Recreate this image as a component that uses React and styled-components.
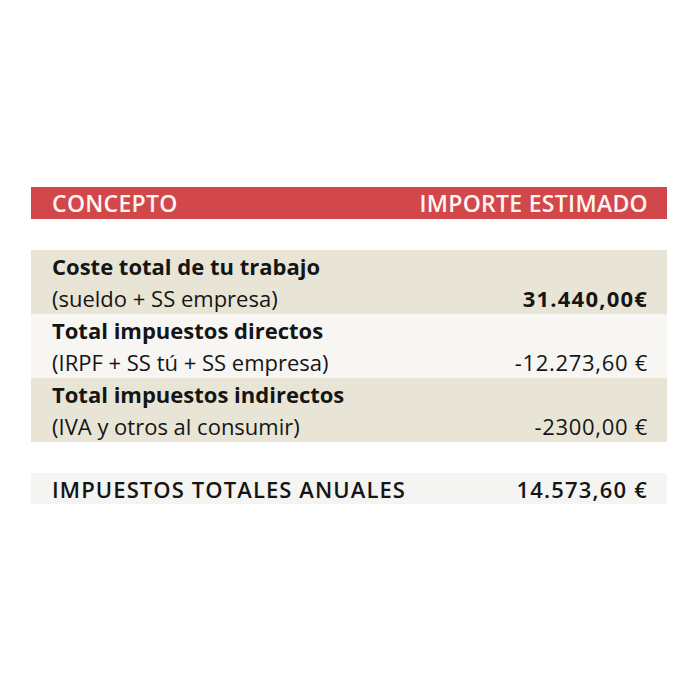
import React from "react";
import styled, { createGlobalStyle } from "styled-components";

const GlobalStyle = createGlobalStyle`
  html, body {
    margin: 0;
    padding: 0;
    background: #ffffff;
  }
  body {
    font-family: "Open Sans", "DejaVu Sans", sans-serif;
    color: #151515;
  }
`;

const rows = [
  {
    title: "Coste total de tu trabajo",
    detail: "(sueldo + SS empresa)",
    amount: "31.440,00€",
    strong: true,
    tone: "beige",
  },
  {
    title: "Total impuestos directos",
    detail: "(IRPF + SS tú + SS empresa)",
    amount: "-12.273,60 €",
    tone: "light",
  },
  {
    title: "Total impuestos indirectos",
    detail: "(IVA y otros al consumir)",
    amount: "-2300,00 €",
    tone: "beige",
  },
];

export default function App() {
  return (
    <>
      <GlobalStyle />
      <Page>
        <Table>
          <Header>
            <span>CONCEPTO</span>
            <span>IMPORTE ESTIMADO</span>
          </Header>
          <Body>
            {rows.map((row) => (
              <Row key={row.title} $tone={row.tone}>
                <Label>
                  <Title>{row.title}</Title>
                  <Detail>{row.detail}</Detail>
                </Label>
                <Amount $strong={row.strong}>{row.amount}</Amount>
              </Row>
            ))}
          </Body>
          <Total>
            <TotalLabel>IMPUESTOS TOTALES ANUALES</TotalLabel>
            <TotalAmount>14.573,60 €</TotalAmount>
          </Total>
        </Table>
      </Page>
    </>
  );
}

const Page = styled.div`
  width: 700px;
  height: 700px;
  padding: 187px 33px 0 31px;
  box-sizing: border-box;
`;

const Table = styled.div`
  display: flex;
  flex-direction: column;
  gap: 31px;
`;

const Header = styled.div`
  display: flex;
  justify-content: space-between;
  align-items: center;
  height: 32px;
  padding: 0 19px 0 21px;
  background: #d2474a;
  color: #fff6f2;
  font-size: 23px;
  font-weight: 600;
  letter-spacing: 0.3px;
`;

const Body = styled.div`
  display: flex;
  flex-direction: column;
`;

const Row = styled.div`
  display: flex;
  justify-content: space-between;
  align-items: flex-end;
  padding: 0 19px 0 21px;
  background: ${(p) => (p.$tone === "beige" ? "#e9e5d6" : "#f7f6f3")};
  line-height: 32px;
  font-size: 22px;
`;

const Label = styled.div`
  display: flex;
  flex-direction: column;
`;

const Title = styled.span`
  font-weight: 700;
`;

const Detail = styled.span`
  font-weight: 400;
`;

const Amount = styled.span`
  font-weight: ${(p) => (p.$strong ? 700 : 400)};
  letter-spacing: ${(p) => (p.$strong ? "1.2px" : "0.7px")};
`;

const Total = styled.div`
  display: flex;
  justify-content: space-between;
  align-items: center;
  height: 31px;
  padding: 0 19px 0 21px;
  background: #f4f4f2;
  font-size: 22px;
  font-weight: 600;
`;

const TotalLabel = styled.span`
  letter-spacing: 1.1px;
`;

const TotalAmount = styled.span`
  letter-spacing: 1.2px;
`;
